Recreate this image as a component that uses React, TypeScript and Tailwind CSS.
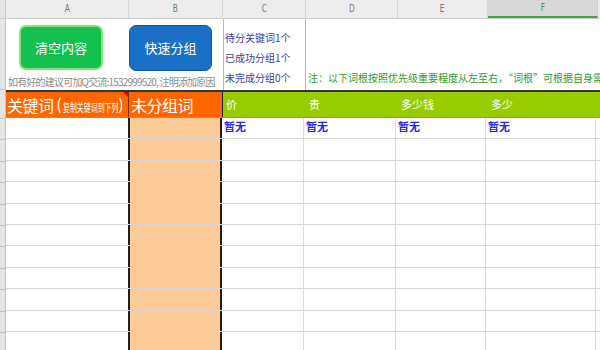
import React from "react";

const cols = [
  { key: "A", w: 123 },
  { key: "B", w: 94 },
  { key: "C", w: 83 },
  { key: "D", w: 92 },
  { key: "E", w: 90 },
  { key: "F", w: 110 },
];

const font = { fontFamily: '"Noto Sans CJK SC", "Noto Sans", sans-serif' };

function ColumnHeader() {
  return (
    <div className="flex h-[19px] bg-[#ececec] border-b border-[#cfcfcf]">
      <div className="w-[6px] shrink-0 border-r border-[#c8c8c8] bg-[#e4e4e4]" />
      {cols.map((c) => (
        <div
          key={c.key}
          style={{ width: c.w }}
          className={
            c.key === "F"
              ? "shrink-0 flex items-center justify-center text-[11px] text-[#3d9a3d] bg-[#d9d9d9] border-b-2 border-[#3aaa3a] border-r border-r-[#cfcfcf]"
              : "shrink-0 flex items-center justify-center text-[11px] text-[#777] border-r border-[#d4d4d4]"
          }
        >
          <span className="font-['DejaVu_Sans_Condensed',sans-serif] scale-x-75">{c.key}</span>
        </div>
      ))}
      <div className="flex-1" />
    </div>
  );
}

function TopSection() {
  return (
    <div className="flex h-[71px]">
      <div className="w-[217px] shrink-0 flex flex-col">
        <div className="flex pt-[6px] pl-[13px] gap-[26px]">
          <button className="w-[84px] h-[45px] rounded-[7px] bg-[#14c04e] border-2 border-[#86e27a] text-white text-[13px] flex items-center justify-center">
            清空内容
          </button>
          <button className="w-[83px] h-[46px] rounded-[7px] bg-[#1a6fc6] border border-[#0f5aa8] text-white text-[13px] flex items-center justify-center">
            快速分组
          </button>
        </div>
        <div className="mt-[4px] pl-[2px] text-[10px] leading-[14px] text-[#8c8c8c] whitespace-nowrap tracking-[-0.8px]">
          如有好的建议可加Q交流:1532999520, 注明添加原因
        </div>
      </div>
      <div className="w-[83px] shrink-0 border-l border-r border-[#b8b8b8] pl-[1px] pt-[12px] flex flex-col gap-[6px] text-[10px] leading-[14px] text-[#3b3b9e] whitespace-nowrap">
        <div>待分关键词1个</div>
        <div>已成功分组1个</div>
        <div>未完成分组0个</div>
      </div>
      <div className="flex-1 flex items-end pb-[5px] pl-[2px] overflow-hidden">
        <div className="text-[10px] leading-[14px] text-[#2f9a2f] whitespace-nowrap">
          注：以下词根按照优先级重要程度从左至右，“词根”可根据自身需要自由设置
        </div>
      </div>
    </div>
  );
}

function HeaderRow() {
  const green = ["价", "贵", "多少钱", "多少"];
  return (
    <div className="flex h-[28px] border-t-2 border-[#333] border-b border-b-[#6ab83a]">
      <div className="relative w-[123px] shrink-0 bg-[#ff6600] text-white flex items-center pl-[1px] whitespace-nowrap overflow-hidden border-r border-[#7a3000]">
        <span className="text-[16px] tracking-[-0.5px]">关键词</span>
        <span className="text-[15px] ml-[3px] mr-[1px]">(</span>
        <span className="inline-block w-[56px] h-[16px] leading-[16px]">
          <span className="inline-block text-[11px] origin-left scale-x-[0.63]">复制关键词到下列</span>
        </span>
        <span className="text-[15px]">)</span>
        <div className="absolute right-0 top-0 w-0 h-0 border-t-[5px] border-l-[5px] border-t-[#e00000] border-l-transparent" />
      </div>
      <div className="w-[94px] shrink-0 bg-[#ff6600] text-white text-[16px] tracking-[-0.5px] flex items-center pl-[2px] border-r border-[#222]">
        未分组词
      </div>
      {green.map((g, i) => (
        <div
          key={g}
          style={{ width: cols[i + 2].w }}
          className="shrink-0 bg-[#99cc00] text-white text-[11px] flex items-center pl-[3px]"
        >
          {g}
        </div>
      ))}
      <div className="flex-1 bg-[#99cc00]" />
    </div>
  );
}

function DataRow({ first }: { first: boolean }) {
  return (
    <div className="flex h-[21.4px] border-b border-[#d6d6d6]">
      <div className="w-[123px] shrink-0" />
      <div className="w-[94px] shrink-0 bg-[#fdcb98] border-l-2 border-r-2 border-[#1e1e1e] -ml-[1px]" />
      {cols.slice(2).map((c, i) => (
        <div
          key={c.key}
          style={{ width: i === 0 ? c.w - 1 : c.w }}
          className="shrink-0 border-r border-[#dcdcdc] pl-[2px] text-[11px] leading-[16px] font-bold text-[#2525e6]"
        >
          {first ? "暂无" : ""}
        </div>
      ))}
      <div className="flex-1" />
    </div>
  );
}

export default function App() {
  const rows = Array.from({ length: 12 }, (_, i) => i);
  return (
    <div className="w-[600px] h-[350px] overflow-hidden bg-white" style={font}>
      <ColumnHeader />
      <div className="flex">
        <div className="w-[6px] shrink-0 bg-[#e6e6e6] border-r border-[#c4c4c4] flex flex-col">
          <div className="h-[71px] border-b border-[#c4c4c4]" />
          <div className="h-[29px] border-b border-[#c4c4c4]" />
          {rows.map((r) => (
            <div key={r} className="h-[21.4px] border-b border-[#bdbdbd] shrink-0" />
          ))}
        </div>
        <div className="flex-1 flex flex-col">
          <TopSection />
          <HeaderRow />
          {rows.map((r) => (
            <DataRow key={r} first={r === 0} />
          ))}
        </div>
      </div>
    </div>
  );
}
